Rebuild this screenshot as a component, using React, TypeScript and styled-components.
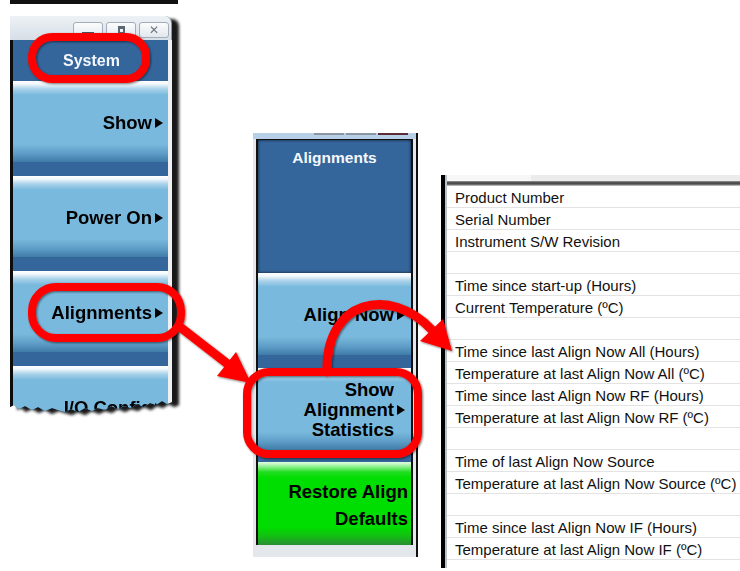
import React from 'react';
import styled, { createGlobalStyle, css } from 'styled-components';

const GlobalStyle = createGlobalStyle`
    html, body {
        margin: 0;
        padding: 0;
        background: #ffffff;
    }
    body {
        font-family: "Liberation Sans", Arial, sans-serif;
    }
`;

const statRows: string[] = [
    'Product Number',
    'Serial Number',
    'Instrument S/W Revision',
    '',
    'Time since start-up (Hours)',
    'Current Temperature (ºC)',
    '',
    'Time since last Align Now All (Hours)',
    'Temperature at last Align Now All (ºC)',
    'Time since last Align Now RF (Hours)',
    'Temperature at last Align Now RF (ºC)',
    '',
    'Time of last Align Now Source',
    'Temperature at last Align Now Source (ºC)',
    '',
    'Time since last Align Now IF (Hours)',
    'Temperature at last Align Now IF (ºC)',
];

type Tone = 'blue' | 'green';

interface MenuButtonProps {
    lines: string[];
    arrowLine?: number;
    height: number;
    gap: number;
    tone?: Tone;
    padRight: number;
    lineHeight?: number;
}

const MenuButton: React.FC<MenuButtonProps> = ({
    lines,
    arrowLine = -1,
    height,
    gap,
    tone = 'blue',
    padRight,
    lineHeight = 20
}) => (
    <SoftKey $h={height} $gap={gap} $tone={tone} $pad={padRight} $lh={lineHeight}>
        {lines.map((l, i) => (
            <KeyLine key={i}>
                {l}
                {tone == 'blue' && <Arrow $hidden={i != arrowLine} />}
            </KeyLine>
        ))}
    </SoftKey>
);

const App: React.FC = () => {
    return (
        <>
            <GlobalStyle />
            <Canvas>
                <Row>
                    <LeftColumn>
                        <TopShade />
                        <ShadowWrap>
                            <LeftWindow>
                                <TitleBar>
                                    <WinButton><MinGlyph /></WinButton>
                                    <WinButton><MaxGlyph /></WinButton>
                                    <WinButton><CloseGlyph>✕</CloseGlyph></WinButton>
                                </TitleBar>
                                <LeftBody>
                                    <SystemHeader>System</SystemHeader>
                                    <MenuButton lines={['Show']} arrowLine={0} height={81} gap={14} padRight={5} />
                                    <MenuButton lines={['Power On']} arrowLine={0} height={81} gap={14} padRight={5} />
                                    <MenuButton lines={['Alignments']} arrowLine={0} height={81} gap={14} padRight={5} />
                                    <MenuButton lines={['I/O Config']} arrowLine={0} height={81} gap={14} padRight={5} />
                                </LeftBody>
                            </LeftWindow>
                        </ShadowWrap>
                    </LeftColumn>

                    <MidFrame>
                        <MidTop>
                            <MidTab $w={30} $color="#8d97a3" />
                            <MidTab $w={30} $color="#8d97a3" />
                            <MidTab $w={30} $color="#5e2c36" />
                        </MidTop>
                        <MidBody>
                            <AlignHeader>Alignments</AlignHeader>
                            <MenuButton lines={['Align Now']} arrowLine={0} height={82} gap={13} padRight={6} />
                            <MenuButton lines={['Show', 'Alignment', 'Statistics']} arrowLine={1} height={82} gap={12} padRight={6} />
                            <MenuButton lines={['Restore Align', 'Defaults']} height={83} gap={12} padRight={3} tone="green" lineHeight={27} />
                        </MidBody>
                    </MidFrame>

                    <TablePanel>
                        <TableTop>
                            <TableTab />
                        </TableTop>
                        <TableRule />
                        {statRows.map((r, i) => (
                            <StatRow key={i}>{r}</StatRow>
                        ))}
                    </TablePanel>
                </Row>

                <Marks width="740" height="571" viewBox="0 0 740 571">
                    <defs>
                        <filter id="redShadow" x="-10%" y="-10%" width="120%" height="120%">
                            <feDropShadow dx="1" dy="1" stdDeviation="1" floodColor="#000" floodOpacity="0.55" />
                        </filter>
                    </defs>
                    <g filter="url(#redShadow)">
                        <g fill="none" stroke="#ff0000" strokeWidth="8">
                            <rect x="32" y="37" width="114" height="42" rx="20" />
                            <rect x="32" y="287" width="149" height="51" rx="24" />
                            <rect x="247" y="372" width="171" height="82" rx="22" />
                        </g>
                        <line x1="180" y1="327" x2="229" y2="365" stroke="#ff0000" strokeWidth="9" />
                        <polygon points="251,383 217,376 236,352" fill="#ff0000" />
                        <path d="M 327 372 C 325 300, 390 285, 432 330" fill="none" stroke="#ff0000" strokeWidth="9" strokeLinecap="round" />
                        <polygon points="452,351 420,341 443,319" fill="#ff0000" />
                    </g>
                </Marks>
            </Canvas>
        </>
    );
};

const Canvas = styled.div`
    position: relative;
    width: 740px;
    height: 571px;
    overflow: hidden;
    background: #ffffff;
`;

const Row = styled.div`
    display: flex;
    flex-direction: row;
    align-items: flex-start;
    height: 100%;
`;

const LeftColumn = styled.div`
    display: flex;
    flex-direction: column;
    margin-left: 10px;
    width: 162px;
`;

const TopShade = styled.div`
    height: 4px;
    width: 168px;
    background: #111;
`;

const ShadowWrap = styled.div`
    margin-top: 12px;
    filter: drop-shadow(7px 3px 1.5px rgba(0, 0, 0, 0.9));
`;

const LeftWindow = styled.div`
    width: 162px;
    height: 402px;
    overflow: hidden;
    clip-path: polygon(
        0 0, 100% 0, 100% 386px,
        157px 388px, 152px 385px, 146px 389px, 140px 387px, 134px 391px, 127px 388px,
        121px 392px, 114px 390px, 108px 393px, 101px 390px, 95px 394px, 88px 392px,
        82px 395px, 75px 392px, 68px 396px, 61px 393px, 55px 396px, 48px 394px,
        42px 392px, 35px 395px, 28px 391px, 22px 394px, 15px 390px, 9px 393px,
        4px 389px, 0 391px
    );
`;

const TitleBar = styled.div`
    height: 24px;
    display: flex;
    justify-content: flex-end;
    align-items: flex-start;
    gap: 3px;
    padding: 6px 2px 0 0;
    box-sizing: border-box;
    background: linear-gradient(to bottom, #eef2f6, #d6dee7);
    border-top-right-radius: 7px;
    border-right: 1px solid #8c98a6;
`;

const WinButton = styled.div`
    width: 30px;
    height: 16px;
    box-sizing: border-box;
    border: 1px solid #a3acb8;
    border-radius: 3px;
    background: linear-gradient(to bottom, #fbfcfd, #e3e8ee);
    display: flex;
    align-items: center;
    justify-content: center;
`;

const MinGlyph = styled.div`
    width: 10px;
    height: 3px;
    margin-top: 8px;
    background: #6e7884;
    border: 1px solid #4c5560;
`;

const MaxGlyph = styled.div`
    width: 7px;
    height: 8px;
    box-sizing: border-box;
    border: 2px solid #5c6670;
    border-top-width: 3px;
`;

const CloseGlyph = styled.span`
    font-family: "DejaVu Sans", sans-serif;
    font-size: 12px;
    font-weight: bold;
    color: #6b7480;
    line-height: 1;
`;

const LeftBody = styled.div`
    background: #34659b;
    border-left: 3px solid #0c0c0c;
    border-right: 4px solid #eef1f4;
`;

const SystemHeader = styled.div`
    height: 41px;
    display: flex;
    align-items: center;
    justify-content: center;
    color: #f4f7fb;
    font-size: 16px;
    font-weight: bold;
    padding-left: 2px;
`;

const toneStyles = {
    blue: css`
        background: linear-gradient(
            to bottom,
            #ffffff 0px,
            #f2f8fc 3px,
            #a9d2ea 8px,
            #79b9dd 14px,
            #79b9dd calc(100% - 18px),
            #5f9fc8 calc(100% - 9px),
            #3f7ca8 100%
        );
    `,
    green: css`
        background: linear-gradient(
            to bottom,
            #e6ffe6 0px,
            #9cf29c 4px,
            #22dd22 10px,
            #00dd00 16px,
            #00dd00 calc(100% - 18px),
            #12c012 calc(100% - 9px),
            #2b8d35 100%
        );
    `,
};

const SoftKey = styled.div<{ $h: number; $gap: number; $tone: Tone; $pad: number; $lh: number }>`
    height: ${p => p.$h}px;
    margin-bottom: ${p => p.$gap}px;
    display: flex;
    flex-direction: column;
    justify-content: center;
    align-items: flex-end;
    padding-right: ${p => p.$pad}px;
    padding-top: 2px;
    box-sizing: border-box;
    color: #000;
    font-size: 18.5px;
    font-weight: bold;
    line-height: ${p => p.$lh}px;
    ${p => toneStyles[p.$tone]}
`;

const KeyLine = styled.div`
    display: flex;
    align-items: center;
    white-space: nowrap;
`;

const Arrow = styled.span<{ $hidden: boolean }>`
    display: inline-block;
    width: 0;
    height: 0;
    margin-left: 3px;
    border-left: 8px solid ${p => (p.$hidden ? 'transparent' : '#000')};
    border-top: 5px solid transparent;
    border-bottom: 5px solid transparent;
`;

const MidFrame = styled.div`
    margin-left: 81px;
    margin-top: 133px;
    width: 165px;
    box-sizing: border-box;
    background: #e4e8ed;
    padding: 0 3px 0 3px;
    border-right: 2px solid #111;
`;

const MidTop = styled.div`
    height: 6px;
    margin: 0 -3px;
    background: #b7d0e8;
    display: flex;
    justify-content: flex-end;
    align-items: flex-start;
    gap: 2px;
    padding-right: 8px;
`;

const MidTab = styled.div<{ $w: number; $color: string }>`
    width: ${p => p.$w}px;
    height: 2px;
    background: ${p => p.$color};
`;

const MidBody = styled.div`
    background: #34659b;
    border-left: 2px solid #111;
    border-right: 2px solid #111;
    border-top: 1px solid #111;
`;

const AlignHeader = styled.div`
    height: 133px;
    box-sizing: border-box;
    padding-top: 9px;
    text-align: center;
    color: #f4f7fb;
    font-size: 15.5px;
    font-weight: bold;
    box-shadow: inset 0 0 3px rgba(0, 0, 0, 0.8);
`;

const TablePanel = styled.div`
    flex: 1;
    margin-left: 23px;
    margin-top: 175px;
    height: 393px;
    border-left: 4px solid #000;
    box-shadow: inset 2px 0 0 #b9c2cc;
    padding-left: 2px;
    background: #ffffff;
`;

const TableTop = styled.div`
    height: 6px;
    background: #ebebeb;
    display: flex;
`;

const TableTab = styled.div`
    width: 84px;
    height: 6px;
    background: #f7f7f7;
`;

const TableRule = styled.div`
    height: 5px;
    background: linear-gradient(to bottom, #9a9a9a, #3c3c3c 40%, #6c6c6c 70%, #d8d8d8);
`;

const StatRow = styled.div`
    height: 22px;
    box-sizing: border-box;
    border-bottom: 1px solid #e3e3e3;
    padding-left: 8px;
    padding-top: 1px;
    display: flex;
    align-items: center;
    font-size: 15px;
    color: #111;
    white-space: nowrap;
`;

const Marks = styled.svg`
    position: absolute;
    left: 0;
    top: 0;
    pointer-events: none;
`;

export default App;
